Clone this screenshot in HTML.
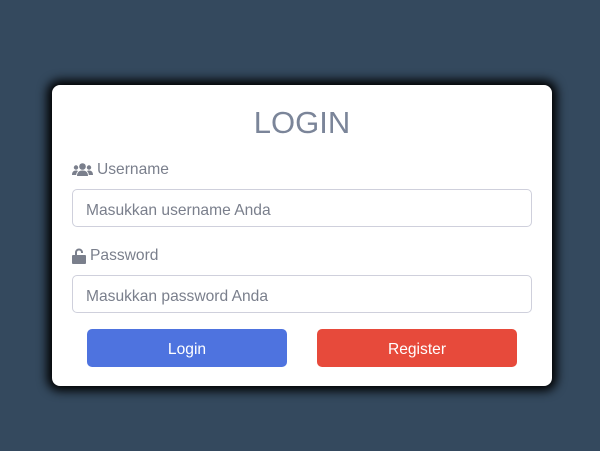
<!DOCTYPE html>
<html><head><style>
body{margin:0;width:600px;height:451px;background:#34495e;font-family:"Liberation Sans",sans-serif;position:relative;overflow:hidden}
.card{position:absolute;left:52px;top:85px;width:500px;height:301px;background:#fff;border-radius:8px;box-shadow:0 0 10px 5px #000}
h1{margin:0;position:absolute;top:20px;left:0;width:100%;text-align:center;font-weight:normal;font-size:31px;color:#7b8599}
.lbl{position:absolute;left:20px;font-size:15.6px;color:#7a7f8c;display:flex;align-items:center;gap:4px}
.inp{position:absolute;left:20px;width:460px;height:38px;border:1px solid #cfd0dc;border-radius:5px;box-sizing:border-box;padding-left:13px;padding-top:3px;line-height:36px;font-size:15.6px;color:#7a7f8c}
.btn{position:absolute;top:244px;width:200px;height:38px;border-radius:5px;color:#fff;font-size:15.6px;text-align:center;line-height:42px}
</style></head><body>
<div class="card">
<h1>LOGIN</h1>
<div class="lbl" style="top:76px"><svg width="21" height="14" viewBox="0 0 21 14" fill="#7a7f8c"><circle cx="10.5" cy="3.5" r="3.3"/><circle cx="4" cy="4.5" r="2.2"/><circle cx="17" cy="4.5" r="2.2"/><path d="M5 13c0-4 2.5-5.5 5.5-5.5S16 9 16 13z"/><path d="M0 12c0-3 1.5-4.5 4-4.5 1 0 1.6.3 2 .6C4.7 9.3 4.2 10.6 4.2 12z"/><path d="M21 12c0-3-1.5-4.5-4-4.5-1 0-1.6.3-2 .6 1.3 1.2 1.8 2.5 1.8 3.9z"/></svg>Username</div>
<div class="inp" style="top:104px">Masukkan username Anda</div>
<div class="lbl" style="top:162px"><svg width="14" height="16" viewBox="0 0 14 16" fill="#7a7f8c"><path d="M3 7V4.5a4 4 0 0 1 8 0V5H9V4.5a2 2 0 0 0-4 0V7h8a1 1 0 0 1 1 1v7a1 1 0 0 1-1 1H1a1 1 0 0 1-1-1V8a1 1 0 0 1 1-1z"/></svg>Password</div>
<div class="inp" style="top:190px">Masukkan password Anda</div>
<div class="btn" style="left:35px;background:#4e73df">Login</div>
<div class="btn" style="left:265px;background:#e74a3b">Register</div>
</div>
</body></html>
